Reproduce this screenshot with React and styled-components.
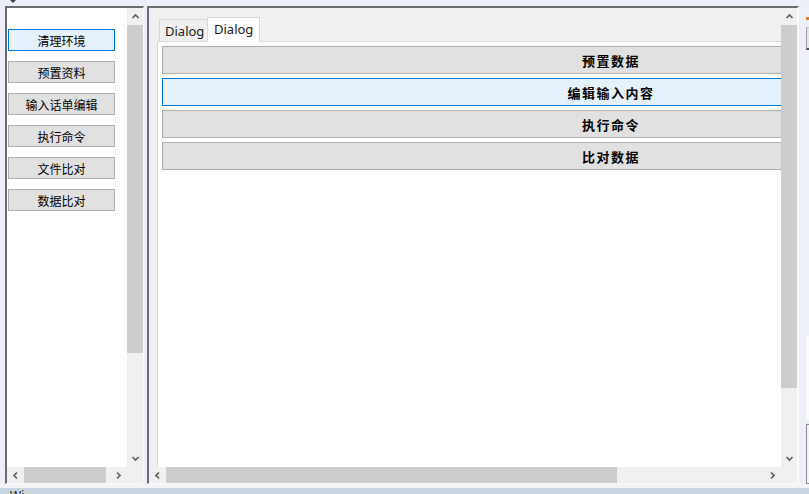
import React from "react";
import styled, { createGlobalStyle } from "styled-components";

const GlobalStyle = createGlobalStyle`
  html, body {
    margin: 0;
    padding: 0;
  }
  body {
    background: #eceff8;
    font-family: "Noto Sans", "Noto Sans CJK SC", sans-serif;
    overflow: hidden;
  }
  #root {
    width: 809px;
    height: 494px;
  }
`;

const sideItems = ["清理环境", "预置资料", "输入话单编辑", "执行命令", "文件比对", "数据比对"];
const rows = ["预置数据", "编辑输入内容", "执行命令", "比对数据"];

const arrowPoints = {
  up: "1.5,6 4.5,3 7.5,6",
  down: "1.5,3 4.5,6 7.5,3",
  left: "6,1.5 3,4.5 6,7.5",
  right: "3,1.5 6,4.5 3,7.5",
};

const Arrow = ({ dir }) => (
  <svg width="9" height="9" viewBox="0 0 9 9">
    <polyline points={arrowPoints[dir]} fill="none" stroke="#606060" strokeWidth="1.7" />
  </svg>
);

const ScrollPane = ({ width, rightBorder, vThumb, hThumb, bg, children }) => (
  <Pane $w={width} $rb={rightBorder}>
    <Viewport $bg={bg}>{children}</Viewport>
    <VBar>
      <ScrollBtn><Arrow dir="up" /></ScrollBtn>
      <Thumb $size={vThumb} />
      <Fill />
      <ScrollBtn><Arrow dir="down" /></ScrollBtn>
    </VBar>
    <HBar>
      <ScrollBtn><Arrow dir="left" /></ScrollBtn>
      <Thumb $size={hThumb} />
      <Fill />
      <ScrollBtn><Arrow dir="right" /></ScrollBtn>
    </HBar>
    <Corner />
  </Pane>
);

const App = () => {
  return (
    <Page>
      <GlobalStyle />
      <TopStrip>
        <svg width="8" height="4" viewBox="0 0 8 4">
          <polygon points="1,0 7,0 4,3" fill="#404040" />
        </svg>
      </TopStrip>
      <Main>
        <ScrollPane width={139} rightBorder={1} vThumb={328} hThumb={82} bg="#ffffff">
          <SideList>
            {sideItems.map((t, i) => (
              <SideButton key={t} $active={i === 0}>{t}</SideButton>
            ))}
          </SideList>
        </ScrollPane>
        <ScrollPane width={652} rightBorder={2} vThumb={363} hThumb={451} bg="#f0f0f0">
          <TabWidget>
            <TabBar>
              <Tab>Dialog</Tab>
              <Tab $selected>Dialog</Tab>
            </TabBar>
            <TabPage>
              {rows.map((t, i) => (
                <Row key={t} $active={i === 1}>{t}</Row>
              ))}
            </TabPage>
          </TabWidget>
        </ScrollPane>
        <OtherWindow>
          <Mark />
          <SmallBox />
          <Fill />
          <WhiteArea />
          <BottomBox />
        </OtherWindow>
      </Main>
      <BottomStrip>
        <StatusText>Wi</StatusText>
      </BottomStrip>
    </Page>
  );
};

export default App;

const Page = styled.div`
  width: 809px;
  height: 494px;
  display: flex;
  flex-direction: column;
  overflow: hidden;
`;

const TopStrip = styled.div`
  height: 6px;
  flex: 0 0 6px;
  padding-left: 9px;
  display: flex;
  align-items: flex-start;
  svg {
    display: block;
  }
`;

const Main = styled.div`
  flex: 0 0 478px;
  height: 478px;
  min-height: 0;
  display: flex;
  padding-left: 5px;
  gap: 3px;
`;

const Pane = styled.div`
  box-sizing: border-box;
  width: ${(p) => p.$w}px;
  height: 478px;
  flex: 0 0 ${(p) => p.$w}px;
  display: grid;
  grid-template-columns: minmax(0, 1fr) 16px;
  grid-template-rows: minmax(0, 1fr) 16px;
  border-top: 2px solid #6b6b6b;
  border-left: 2px solid #6b6b6b;
  border-right: ${(p) => p.$rb}px solid #fafafa;
  border-bottom: 1px solid #fafafa;
`;

const Viewport = styled.div`
  min-width: 0;
  min-height: 0;
  overflow: hidden;
  background: ${(p) => p.$bg};
`;

const VBar = styled.div`
  display: flex;
  flex-direction: column;
  min-height: 0;
  background: #f0f0f0;
`;

const HBar = styled.div`
  display: flex;
  min-width: 0;
  background: #f0f0f0;
`;

const ScrollBtn = styled.div`
  flex: 0 0 17px;
  display: flex;
  align-items: center;
  justify-content: center;
  svg {
    display: block;
  }
`;

const Thumb = styled.div`
  flex: 0 0 ${(p) => p.$size}px;
  background: #cdcdcd;
`;

const Fill = styled.div`
  flex: 1;
`;

const Corner = styled.div`
  background: #f0f0f0;
`;

const SideList = styled.div`
  display: flex;
  flex-direction: column;
  gap: 10px;
  padding: 21px 0 0 1px;
`;

const SideButton = styled.div`
  box-sizing: border-box;
  width: 107px;
  height: 22px;
  display: flex;
  align-items: center;
  justify-content: center;
  border: 1px solid ${(p) => (p.$active ? "#0078d7" : "#adadad")};
  background: ${(p) => (p.$active ? "#e5f1fb" : "#e1e1e1")};
  font: 12px "Noto Sans CJK SC", sans-serif;
  color: #000;
`;

const TabWidget = styled.div`
  width: 908px;
  margin: 9px 0 0 8px;
`;

const TabBar = styled.div`
  display: flex;
  align-items: flex-end;
  height: 24px;
  padding-left: 2px;
`;

const Tab = styled.div`
  box-sizing: border-box;
  position: relative;
  z-index: ${(p) => (p.$selected ? 1 : 0)};
  width: ${(p) => (p.$selected ? 53 : 48)}px;
  height: ${(p) => (p.$selected ? 25 : 22)}px;
  margin-bottom: ${(p) => (p.$selected ? -1 : 0)}px;
  padding: ${(p) => (p.$selected ? "3px 0 0 6px" : "3px 0 0 5px")};
  background: ${(p) => (p.$selected ? "#ffffff" : "#f0f0f0")};
  border: 1px solid #d9d9d9;
  border-bottom: none;
  border-right: ${(p) => (p.$selected ? "1px solid #d9d9d9" : "none")};
  font: 13px "Noto Sans", sans-serif;
  line-height: 16px;
  color: #1a1a1a;
`;

const TabPage = styled.div`
  box-sizing: border-box;
  height: 600px;
  background: #ffffff;
  border: 1px solid #d9d9d9;
  padding: 4px;
  display: flex;
  flex-direction: column;
  gap: 4px;
`;

const Row = styled.div`
  box-sizing: border-box;
  height: 28px;
  flex: 0 0 28px;
  display: flex;
  align-items: center;
  justify-content: center;
  border: 1px solid ${(p) => (p.$active ? "#0078d7" : "#adadad")};
  background: ${(p) => (p.$active ? "#e5f1fb" : "#e1e1e1")};
  font: bold 13px "Noto Sans CJK SC", sans-serif;
  letter-spacing: 1.5px;
  color: #000;
`;

const OtherWindow = styled.div`
  flex: 1;
  display: flex;
  flex-direction: column;
  padding: 11px 0 0 5px;
  margin-left: -1px;
  background: #eef0f8;
`;

const Mark = styled.div`
  width: 3px;
  height: 3px;
  background: #e07b2a;
  margin-bottom: 7px;
`;

const SmallBox = styled.div`
  height: 20px;
  border-left: 1px solid #a0a0a0;
  border-top: 1px solid #d0d0d0;
  border-bottom: 2px solid #505050;
  background: #e6e6e6;
`;

const WhiteArea = styled.div`
  height: 84px;
  background: #fbfbfb;
  margin-bottom: 4px;
`;

const BottomBox = styled.div`
  height: 58px;
  border: 1px solid #8a8a8a;
  border-right: none;
  background: #f4f4f4;
`;

const BottomStrip = styled.div`
  flex: 1;
  border-top: 4px solid #f3f4f8;
  background: #c9d4e1;
  overflow: hidden;
  padding-left: 10px;
`;

const StatusText = styled.div`
  font: 12px "Noto Sans", sans-serif;
  line-height: 12px;
  padding-top: 2px;
  color: #222;
`;
